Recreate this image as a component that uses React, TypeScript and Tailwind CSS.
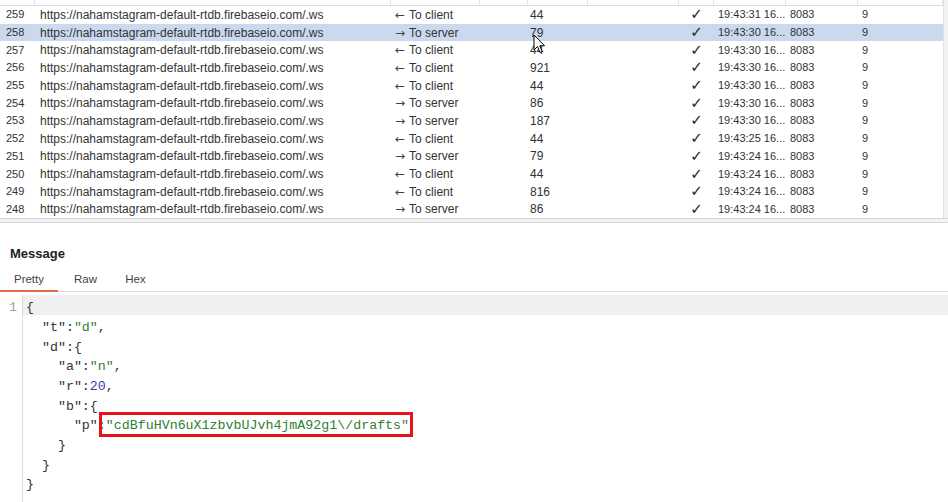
import React from 'react';

type Row = [string, 'in' | 'out', string, string];

const rows: Row[] = [
  ['259', 'in', '44', '19:43:31 16...'],
  ['258', 'out', '79', '19:43:30 16...'],
  ['257', 'in', '44', '19:43:30 16...'],
  ['256', 'in', '921', '19:43:30 16...'],
  ['255', 'in', '44', '19:43:30 16...'],
  ['254', 'out', '86', '19:43:30 16...'],
  ['253', 'out', '187', '19:43:30 16...'],
  ['252', 'in', '44', '19:43:25 16...'],
  ['251', 'out', '79', '19:43:24 16...'],
  ['250', 'in', '44', '19:43:24 16...'],
  ['249', 'in', '816', '19:43:24 16...'],
  ['248', 'out', '86', '19:43:24 16...'],
];

const cols = 'grid grid-cols-[35px_356px_89px_48px_60px_91px_35px_72px_72px_85px]';

const K = ({ children }: { children: React.ReactNode }) => <span className="text-[#333]">{children}</span>;
const S = ({ children }: { children: React.ReactNode }) => <span className="text-[#2f7f34]">{children}</span>;
const N = ({ children }: { children: React.ReactNode }) => <span className="text-[#3a3aa8]">{children}</span>;

const Cursor = () => (
  <svg width="13" height="21" viewBox="0 0 13 21" className="absolute left-[533px] top-[34px]">
    <path d="M1 1 L1 16 L4.5 12.5 L7 18.5 L9.2 17.6 L6.8 11.8 L11.5 11.8 Z" fill="#fff" stroke="#000" strokeWidth="1" strokeLinejoin="round" />
  </svg>
);

export default function App() {
  const lines: { indent: number; node: React.ReactNode }[] = [
    { indent: 0, node: <K>{'{'}</K> },
    { indent: 1, node: <><K>"t":</K><S>"d"</S><K>,</K></> },
    { indent: 1, node: <K>"d":{'{'}</K> },
    { indent: 2, node: <><K>"a":</K><S>"n"</S><K>,</K></> },
    { indent: 2, node: <><K>"r":</K><N>20</N><K>,</K></> },
    { indent: 2, node: <K>"b":{'{'}</K> },
    {
      indent: 3,
      node: (
        <>
          <K>"p"</K>
          <span className="relative inline-block">
            <K>:</K>
            <S>"cdBfuHVn6uX1zbvbUJvh4jmA92g1\/drafts"</S>
            <span className="absolute left-[1px] -right-[4px] -top-[7px] -bottom-[4px] border-[3px] border-[#e8141b]" />
          </span>
        </>
      ),
    },
    { indent: 2, node: <K>{'}'}</K> },
    { indent: 1, node: <K>{'}'}</K> },
    { indent: 0, node: <K>{'}'}</K> },
  ];

  return (
    <div className="relative w-[948px] h-[502px] overflow-hidden bg-white font-['Liberation_Sans',Arial,sans-serif] text-[#333]">
      {/* websocket history table */}
      <div className="flex">
        <div className="w-[943px]">
          <div className={`${cols} h-[6px] border-b border-[#dcdcdc]`}>
            {Array.from({ length: 10 }).map((_, i) => (
              <div key={i} className="border-r border-[#e3e3e3]" />
            ))}
          </div>
          {rows.map(([id, dir, len, time]) => (
            <div
              key={id}
              className={`${cols} h-[17.7px] items-center text-[12px] leading-none ${id === '258' ? 'bg-[#cad9ee]' : ''}`}
            >
              <div className="pl-[6px] text-[11px]">{id}</div>
              <div className="pl-[5px] whitespace-nowrap">https://nahamstagram-default-rtdb.firebaseio.com/.ws</div>
              <div className="pl-[4px] whitespace-nowrap flex items-center">
                <span className="font-['DejaVu_Sans',sans-serif] text-[12px] mr-[4px] text-[#444]">{dir === 'in' ? '←' : '→'}</span>
                {dir === 'in' ? 'To client' : 'To server'}
              </div>
              <div />
              <div className="pl-[2px]">{len}</div>
              <div />
              <div className="text-center font-['DejaVu_Sans',sans-serif] text-[15px] text-[#222]">✓</div>
              <div className="pl-[4px] text-[11px] whitespace-nowrap overflow-hidden">{time}</div>
              <div className="pl-[4px] text-[11px]">8083</div>
              <div className="pl-[4px] text-[11px]">9</div>
            </div>
          ))}
        </div>
        <div className="w-[5px] bg-[#f2f2f2] border-l border-[#dde3ea]" />
      </div>
      <div className="h-[5px] border-t border-[#c9d1dc] border-b border-[#d6d6d6] bg-[#f3f3f3]" />

      {/* message panel */}
      <div className="pt-[22px]">
        <div className="px-[10px] text-[13px] font-bold leading-[18px] text-[#1e1e1e]">Message</div>
        <div className="mt-[5px] flex h-[24px] border-b border-[#d9d9d9] text-[11.5px] text-[#444]">
          <div className="w-[58px] flex items-center justify-center border-b-2 border-[#e36b4a] -mb-px">Pretty</div>
          <div className="w-[55px] flex items-center justify-center">Raw</div>
          <div className="w-[45px] flex items-center justify-center">Hex</div>
        </div>
        <div className="flex pt-[3px] font-['Liberation_Mono','Courier_New',monospace] text-[13.3px]">
          <div className="w-[23px] border-r border-[#dcdcdc] h-[210px]">
            <div className="h-[19.7px] flex items-center justify-end pr-[5px] pt-[6px] text-[#a0a0a0]">1</div>
          </div>
          <div className="flex-1">
            {lines.map((l, i) => (
              <div
                key={i}
                className={`h-[19.7px] flex items-center whitespace-pre pl-[3px] pt-[6px] ${i === 0 ? 'bg-[#f0f0f0]' : ''}`}
              >
                <span>{'  '.repeat(l.indent)}</span>
                <span className="leading-[13.7px]">{l.node}</span>
              </div>
            ))}
          </div>
        </div>
      </div>

      <Cursor />
    </div>
  );
}
